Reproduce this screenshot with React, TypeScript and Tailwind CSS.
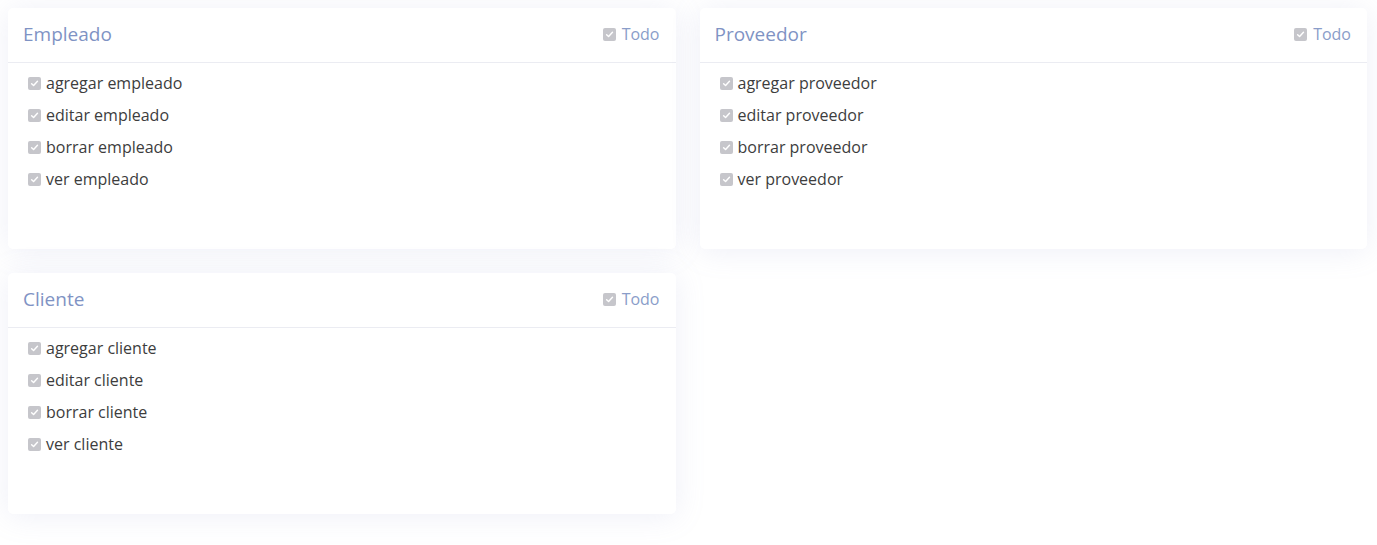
import React from "react";

const Check = () => (
  <span className="inline-flex w-[13px] h-[13px] rounded-[2px] bg-[#c6c6cb] items-center justify-center shrink-0">
    <svg width="9" height="9" viewBox="0 0 10 10">
      <path d="M1.8 5.2 L4 7.3 L8.3 2.6" fill="none" stroke="#ffffff" strokeWidth="1.6" strokeLinecap="round" strokeLinejoin="round" />
    </svg>
  </span>
);

const Card = ({ title, items }: { title: string; items: string[] }) => (
  <div className="bg-white rounded-[5px] shadow-[0_2px_30px_rgba(140,150,200,0.15)] h-[241px] flex flex-col">
    <div className="h-[55px] flex items-center justify-between pl-[15px] pr-[16px] pb-[2px] border-b border-[#ebecf2]">
      <span className="text-[19px] text-[#7f93c4]" style={{ fontFamily: '"Open Sans", sans-serif' }}>{title}</span>
      <label className="flex items-center gap-[6px] text-[16px] text-[#8a9dc9]" style={{ fontFamily: '"Open Sans", sans-serif' }}>
        <Check />
        Todo
      </label>
    </div>
    <div className="pt-[4px] pl-[20px]">
      {items.map((it) => (
        <div key={it} className="h-8 flex items-center gap-[5px] text-[16px] text-[#3d3d3d]" style={{ fontFamily: '"Open Sans", sans-serif' }}>
          <Check />
          {it}
        </div>
      ))}
    </div>
  </div>
);

export default function App() {
  const mk = (n: string) => [`agregar ${n}`, `editar ${n}`, `borrar ${n}`, `ver ${n}`];
  return (
    <div className="w-[1377px] h-[545px] bg-white pt-[8px] pl-[8px] pr-[10px]">
      <div className="grid grid-cols-2 gap-x-[24px] gap-y-[24px]">
        <Card title="Empleado" items={mk("empleado")} />
        <Card title="Proveedor" items={mk("proveedor")} />
        <Card title="Cliente" items={mk("cliente")} />
      </div>
    </div>
  );
}
